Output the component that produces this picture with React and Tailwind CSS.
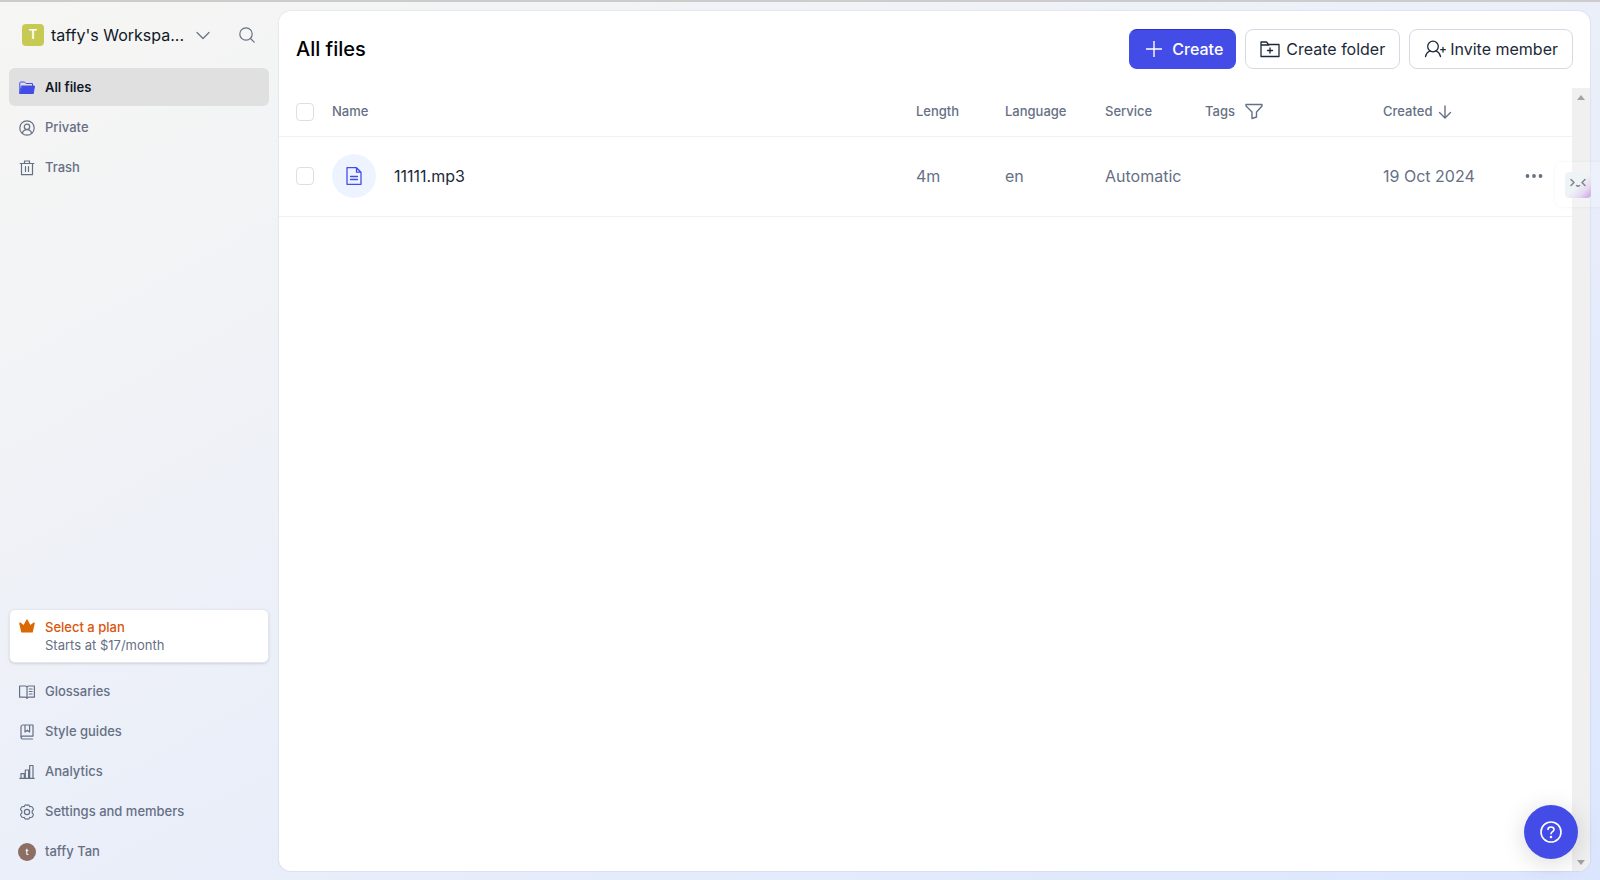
import React, { useState } from 'react';

const Icon = ({ children, className = 'size-4', box = 16, width = 1.2 }) => (
    <svg
        viewBox={`0 0 ${box} ${box}`}
        className={`shrink-0 ${className}`}
        fill="none"
        stroke="currentColor"
        strokeWidth={width}
        strokeLinecap="round"
        strokeLinejoin="round"
        aria-hidden="true"
    >
        {children}
    </svg>
);

const icons = {
    files: (
        <Icon className="size-4 text-[#444ce7]" width={1}>
            <path d="M.8 13V3c0-.6.300-1 .9-1h3.800L7 3.500h6.500V6" />
            <path d="M2.700 6h12.800l-1.200 7.500H1z" fill="currentColor" />
        </Icon>
    ),
    private: (
        <Icon>
            <circle cx="8" cy="8" r="7.200" />
            <circle cx="8" cy="6.800" r="2.700" />
            <path d="M3.300 13.300c.7-2.200 2.400-3.700 4.700-3.700s4 1.500 4.700 3.700" />
        </Icon>
    ),
    trash: (
        <Icon>
            <path d="M1.200 3.500h13.600M5.500 3.200V1h5v2.200M2.500 3.700v11h11v-11M6.500 6.500v5M9.500 6.500v5" />
        </Icon>
    ),
    glossaries: (
        <Icon>
            <path d="M8 3.200C7.500 2.400 7 2 6 2H.6v11.200h5.600c1 0 1.500.5 1.800 1.300.3-.8.8-1.300 1.800-1.300h5.600V2H10C9 2 8.500 2.400 8 3.200zM8 3.200v11M10.300 5h2.800M10.300 7.500h2.800M10.300 10h2.800" />
        </Icon>
    ),
    guides: (
        <Icon>
            <path d="M14 12.200V1H4a2 2 0 0 0-2 2v10.400M14 12.200H3.500a1.400 1.400 0 0 0 0 2.800H13.500M6 1v7L8.300 6.200l2.300 1.800V1" />
        </Icon>
    ),
    analytics: (
        <Icon>
            <path d="M.8 14.300h14.400M2 14V9.700h3.300V14M6.300 14V6h3.300V14M10.700 14V1.500H14V14" />
        </Icon>
    ),
    settings: (
        <Icon>
            <path d="M5.300 2.700C5.600 1.500 6 .8 6.800.8h.4c.4.6 1.200.6 1.600 0h.4c.8 0 1.200.7 1.500 1.900 1.200-.3 2.300-.3 2.700.5l.9 1.600c.4.8-.2 1.700-1.100 2.300v1.800c.9.600 1.500 1.500 1.100 2.300l-.9 1.600c-.4.8-1.500.8-2.700.5-.3 1.200-.7 1.900-1.500 1.900h-.4c-.4-.6-1.200-.6-1.600 0h-.4c-.8 0-1.200-.7-1.500-1.900-1.200.3-2.300.3-2.700-.5l-.9-1.600c-.4-.8.2-1.700 1.100-2.300V7.100C1.900 6.500 1.300 5.600 1.700 4.800l.9-1.600c.4-.8 1.500-.8 2.700-.5z" />
            <circle cx="8" cy="8" r="2.600" />
        </Icon>
    ),
};

const mainLinks = [
    { name: 'All files', icon: icons.files, active: true },
    { name: 'Private', icon: icons.private },
    { name: 'Trash', icon: icons.trash },
];

const bottomLinks = [
    { name: 'Glossaries', icon: icons.glossaries },
    { name: 'Style guides', icon: icons.guides },
    { name: 'Analytics', icon: icons.analytics },
    { name: 'Settings and members', icon: icons.settings },
    {
        name: 'taffy Tan',
        icon: (
            <span className="flex size-[18px] -mx-px shrink-0 items-center justify-center rounded-full bg-[#8d6e63] text-[9px] font-medium text-white">
                t
            </span>
        ),
    },
];

const files = [
    { name: '11111.mp3', length: '4m', language: 'en', service: 'Automatic', created: '19 Oct 2024' },
];

const NavList = ({ links }) => (
    <ul className="flex flex-col gap-0.5">
        {links.map((link) => (
            <li key={link.name}>
                <a
                    href="#"
                    className={`flex h-[38px] items-center gap-2.5 rounded-md px-2.5 pt-px text-[13px] ${
                        link.active ? 'bg-[#e0e0e0] font-semibold text-[#101828]' : 'font-medium text-[#667085]'
                    }`}
                >
                    {link.icon}
                    {link.name}
                </a>
            </li>
        ))}
    </ul>
);

const Checkbox = ({ label, checked, onChange }) => (
    <input
        type="checkbox"
        aria-label={label}
        checked={checked}
        onChange={onChange}
        className="block size-[18px] appearance-none rounded border border-[#dcdfe6] bg-white checked:bg-[#444ce7]"
    />
);

const Sidebar = () => (
    <aside className="flex w-[279px] shrink-0 flex-col pr-2.5 pb-2.5 pl-[9px]">
        <div className="flex h-[66px] items-center justify-between pr-3.5 pl-[13px]">
            <button className="flex items-center gap-[7px] text-base text-[#101828]">
                <span className="flex size-[22px] items-center justify-center rounded bg-[#c6ca53] text-[13px] font-semibold text-white">
                    T
                </span>
                taffy's Workspa...
                <Icon className="ml-1 size-4 text-[#667085]">
                    <path d="M2 5.500l6 6 6-6" />
                </Icon>
            </button>
            <button aria-label="Search" className="text-[#667085]">
                <Icon>
                    <circle cx="7" cy="7" r="6.200" />
                    <path d="M11.500 11.500l3.700 3.700" />
                </Icon>
            </button>
        </div>
        <nav>
            <NavList links={mainLinks} />
        </nav>
        <a
            href="#"
            className="mt-auto mb-[9px] flex gap-2.5 rounded-md border border-[#e4e7ec] bg-white px-[9px] py-2 text-[13px] leading-[18px] shadow-sm"
        >
            <svg viewBox="0 0 16 16" className="size-4 shrink-0 text-[#dc6803]" fill="currentColor" aria-hidden="true">
                <path d="M2.300 14.500.2 5.300c-.1-.8.700-1.200 1.200-.7L4.600 7 7.300 2c.3-.6 1.100-.6 1.400 0l2.700 5 3.200-2.400c.5-.5 1.300-.1 1.200.7l-2.100 9.200z" />
            </svg>
            <span>
                <span className="block font-medium text-[#d9560b]">Select a plan</span>
                <span className="block text-[#667085]">Starts at $17/month</span>
            </span>
        </a>
        <NavList links={bottomLinks} />
    </aside>
);

const Header = () => (
    <header className="flex h-[77px] shrink-0 items-center justify-between pr-[17px] pb-0.5 pl-[17px]">
        <h1 className="text-xl font-medium text-black">All files</h1>
        <div className="flex gap-[9px]">
            <button className="flex h-10 items-center gap-2.5 rounded-lg border border-[#444ce7] border-t-[#2d31c9] bg-[#444ce7] pr-3 pl-4 text-base font-medium text-white">
                <Icon className="size-4" width={1.4}>
                    <path d="M8 0v16M0 8h16" />
                </Icon>
                Create
            </button>
            <button className="flex h-10 items-center gap-1.5 rounded-lg border border-[#d5d9e2] bg-white px-3.5 text-base text-[#1d2939]">
                <Icon className="size-5" box={20} width={1.3}>
                    <path d="M1 16.500V3h5.500l2 2.500h10.500v12H1zM1 6h8M10 9v5M7.500 11.500h5" />
                </Icon>
                Create folder
            </button>
            <button className="flex h-10 items-center gap-1 rounded-lg border border-[#d5d9e2] bg-white px-3.5 text-base text-[#1d2939]">
                <Icon className="size-[22px]" box={22} width={1.3}>
                    <circle cx="9" cy="8.500" r="5.300" />
                    <path d="M1.500 18.500c.6-3 2.200-4.600 4.300-5.500M16.500 18.500c-.6-3-2.200-4.600-4.300-5.500M19 9.500v4.500M16.700 11.700h4.600" />
                </Icon>
                Invite member
            </button>
        </div>
    </header>
);

const FileTable = () => {
    const [selected, setSelected] = useState([]);

    const toggle = (name) => {
        setSelected(selected.includes(name) ? selected.filter((n) => n !== name) : [...selected, name]);
    };

    return (
        <table className="w-full table-fixed text-left">
            <colgroup>
                <col className="w-[53px]" />
                <col />
                <col className="w-[89px]" />
                <col className="w-[100px]" />
                <col className="w-[100px]" />
                <col className="w-[178px]" />
                <col className="w-[142px]" />
                <col className="w-[47px]" />
            </colgroup>
            <thead>
                <tr className="h-12 border-b border-[#f0f1f3] text-[13px] text-[#667085] [&>th]:font-medium">
                    <th className="pl-[17px]">
                        <Checkbox
                            label="Select all files"
                            checked={selected.length === files.length}
                            onChange={() => setSelected(selected.length ? [] : files.map((f) => f.name))}
                        />
                    </th>
                    <th>Name</th>
                    <th>Length</th>
                    <th>Language</th>
                    <th>Service</th>
                    <th>
                        <div className="flex items-center gap-2.5">
                            Tags
                            <button aria-label="Filter by tag">
                                <Icon className="size-[18px]" box={18} width={1.4}>
                                    <path d="M1 1.500h16V3l-5.500 6v5L7 15.500V9L1 3z" />
                                </Icon>
                            </button>
                        </div>
                    </th>
                    <th>
                        <button className="flex items-center gap-1.5">
                            Created
                            <Icon className="size-3.5" box={14} width={1.4}>
                                <path d="M7 1v12M1.500 7.500L7 13l5.500-5.500" />
                            </Icon>
                        </button>
                    </th>
                    <th></th>
                </tr>
            </thead>
            <tbody>
                {files.map((file) => (
                    <tr key={file.name} className="h-20 border-b border-[#f0f1f3] text-base text-[#667085]">
                        <td className="pl-[17px]">
                            <Checkbox
                                label={`Select ${file.name}`}
                                checked={selected.includes(file.name)}
                                onChange={() => toggle(file.name)}
                            />
                        </td>
                        <td>
                            <div className="flex items-center gap-[18px] text-[#1d2939]">
                                <span className="flex size-11 items-center justify-center rounded-full bg-[#eef4ff] text-[#444ce7]">
                                    <Icon className="size-[18px]" box={18} width={1.3}>
                                        <path d="M2 .7h9.500L16 5.200v12.100H2zM11.500.7v4.500H16M5.500 9.500h7M5.500 12.500h7" />
                                    </Icon>
                                </span>
                                {file.name}
                            </div>
                        </td>
                        <td>{file.length}</td>
                        <td>{file.language}</td>
                        <td>{file.service}</td>
                        <td></td>
                        <td>{file.created}</td>
                        <td>
                            <button aria-label="More actions" className="block">
                                <svg viewBox="0 0 18 18" className="size-[18px]" fill="currentColor">
                                    <circle cx="2.500" cy="9" r="1.900" />
                                    <circle cx="9" cy="9" r="1.900" />
                                    <circle cx="15.500" cy="9" r="1.900" />
                                </svg>
                            </button>
                        </td>
                    </tr>
                ))}
            </tbody>
        </table>
    );
};

const App = () => {
    return (
        <div className="flex h-screen border-t-2 border-[#cccccc] bg-linear-to-br from-[#f6f6f3] via-[#ebeff9] to-[#dbe6fe] font-['Inter',sans-serif]">
            <Sidebar />
            <main className="mt-[9px] mr-2.5 mb-[9px] flex min-w-0 flex-1 flex-col overflow-hidden rounded-xl bg-white shadow-[0_0_1px_1px_rgba(16,24,40,0.05)]">
                <Header />
                <div className="flex min-h-0 flex-1">
                    <div className="min-w-0 flex-1">
                        <FileTable />
                    </div>
                    {/* scroll track */}
                    <div className="flex w-[18px] flex-col items-center justify-between bg-[#f0f0f0] pt-[7px] pb-1.5 text-[#a3a3a3]">
                        <svg viewBox="0 0 8 5" className="h-[5px] w-2" fill="currentColor">
                            <path d="M4 0l4 5H0z" />
                        </svg>
                        <svg viewBox="0 0 8 5" className="h-[5px] w-2" fill="currentColor">
                            <path d="M4 5l4-5H0z" />
                        </svg>
                    </div>
                </div>
            </main>

            <button
                aria-label="Assistant"
                className="fixed top-[162px] right-0 flex h-[45px] w-[45px] items-center rounded-l-lg bg-white/20 pl-2.5 shadow-[0_0_3px_rgba(0,0,0,0.06)]"
            >
                <span className="flex size-[26px] items-center justify-center rounded bg-[linear-gradient(135deg,#eef4f6_50%,#e6d8f0_75%,#c79fe4)] text-[#808488]">
                    <Icon className="size-4" width={1.5}>
                        <path d="M1 2.500l3 3-3 3M15 2.500l-3 3 3 3M6.500 8.500c.8.8 2.200.8 3 0" />
                    </Icon>
                </span>
            </button>
            <button
                aria-label="Help"
                className="fixed right-[22px] bottom-[21px] flex size-[54px] items-center justify-center rounded-full bg-[#444ce7] text-white shadow-[0_4px_24px_rgba(0,0,0,0.15)]"
            >
                <Icon className="size-[22px]" box={22} width={1.6}>
                    <circle cx="11" cy="11" r="10" />
                    <path d="M8 8.500C8 7 9.300 6 11 6s3 1 3 2.500c0 2-3 2.200-3 4.300" />
                    <circle cx="11" cy="16" r=".5" fill="currentColor" />
                </Icon>
            </button>
        </div>
    );
};

export default App;
